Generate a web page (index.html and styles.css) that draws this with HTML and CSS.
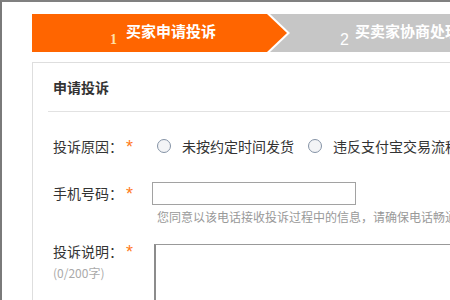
FILE: index.html
```html
<!DOCTYPE html>
<html lang="zh-CN">
<head>
    <meta charset="UTF-8">
    <title>申请投诉</title>
    <link rel="stylesheet" href="styles.css">
</head>
<body>
    <div class="frame">
        <div class="steps">
            <div class="step-first">
                <div class="step-active">
                    <span class="step-num num-first">1</span>
                    <span class="step-text">买家申请投诉</span>
                </div>
            </div>
            <div class="step-next">
                <span class="step-num">2</span>
                <span class="step-text">买卖家协商处理</span>
            </div>
        </div>

        <div class="panel">
            <div class="panel-head">申请投诉</div>
            <div class="form">
                <div class="row">
                    <div class="label">投诉原因：<span class="req">*</span></div>
                    <div class="field options">
                        <span class="radio"></span>
                        <span class="opt">未按约定时间发货</span>
                        <span class="radio radio-second"></span>
                        <span class="opt">违反支付宝交易流程</span>
                    </div>
                </div>
                <div class="row row-phone">
                    <div class="label">手机号码：<span class="req">*</span></div>
                    <div class="field">
                        <div class="input"></div>
                        <div class="hint">您同意以该电话接收投诉过程中的信息，请确保电话畅通</div>
                    </div>
                </div>
                <div class="row row-desc">
                    <div class="label">
                        <div>投诉说明：<span class="req">*</span></div>
                        <div class="count">(0/200字)</div>
                    </div>
                    <div class="field">
                        <div class="textarea"></div>
                    </div>
                </div>
            </div>
        </div>
    </div>
</body>
</html>
```

FILE: styles.css
```css
body, html {
    margin: 0;
    padding: 0;
    width: 450px;
    height: 300px;
    overflow: hidden;
    background: #fff;
    font-family: "Noto Sans CJK SC", sans-serif;
    color: #333;
}
.frame {
    height: 298px;
    border-top: 2px solid #808080;
    border-left: 2px solid #7a7a7a;
    overflow: hidden;
}

/* steps bar */
.steps {
    display: flex;
    margin: 12px 0 0 30px;
    height: 38px;
    background: #c6c6c6;
    width: 600px;
}
.step-first {
    width: 258px;
    height: 38px;
    background: #fff;
    clip-path: polygon(0 0, 238px 0, 258px 19px, 238px 38px, 0 38px);
}
.step-active {
    height: 38px;
    background: #ff6500;
    clip-path: polygon(0 0, 235px 0, 255px 19px, 235px 38px, 0 38px);
    display: flex;
    align-items: center;
    padding-left: 78px;
    color: #fff;
}
.step-next {
    display: flex;
    align-items: center;
    padding-left: 50px;
    color: #fff;
}
.step-text {
    font-size: 15px;
    font-weight: bold;
    line-height: 20px;
    margin-top: -4px;
}
.step-num {
    font-family: "Liberation Sans", sans-serif;
    font-size: 16px;
    line-height: 16px;
    margin: 14px 6px 0 0;
}
.num-first {
    font-family: "Liberation Serif", serif;
    font-weight: bold;
    font-size: 14px;
    color: #ffe1a8;
    margin-right: 9px;
}

/* panel */
.panel {
    margin: 10px 0 0 30px;
    width: 600px;
    height: 300px;
    border-top: 1px solid #dedede;
    border-left: 1px solid #dedede;
}
.panel-head {
    margin-left: 15px;
    padding-left: 5px;
    height: 48px;
    line-height: 48px;
    font-size: 14px;
    font-weight: bold;
    border-bottom: 1px solid #e2e2e2;
}
.form {
    padding: 24px 0 0 20px;
}
.row {
    display: flex;
}
.label {
    width: 99px;
    flex-shrink: 0;
    font-size: 14px;
    line-height: 20px;
}
.req {
    color: #ff7a1a;
    font-family: "Liberation Sans", sans-serif;
    font-size: 18px;
    line-height: 14px;
    margin-left: 3px;
    vertical-align: -1px;
}
.options {
    display: flex;
    align-items: center;
    font-size: 14px;
    line-height: 20px;
}
.radio {
    width: 12px;
    height: 12px;
    border: 1px solid #8593a6;
    border-radius: 50%;
    background: #f3f4f6;
    margin: 0 11px 0 5px;
}
.radio-second {
    margin-left: 14px;
}
.opt {
    white-space: nowrap;
}

.row-phone {
    margin-top: 26px;
}
.row-phone .label {
    padding-top: 1px;
}
.input {
    width: 202px;
    height: 21px;
    border: 1px solid #a2a2a2;
}
.hint {
    margin: 4px 0 0 5px;
    font-size: 12px;
    line-height: 16px;
    color: #999;
    white-space: nowrap;
}

.row-desc {
    margin-top: 16px;
}
.count {
    margin-top: 4px;
    font-size: 12px;
    line-height: 16px;
    color: #aaa;
}
.textarea {
    margin: 3px 0 0 2px;
    width: 320px;
    height: 80px;
    border-top: 1px solid #999;
    border-left: 2px solid #8c8c8c;
}
```
